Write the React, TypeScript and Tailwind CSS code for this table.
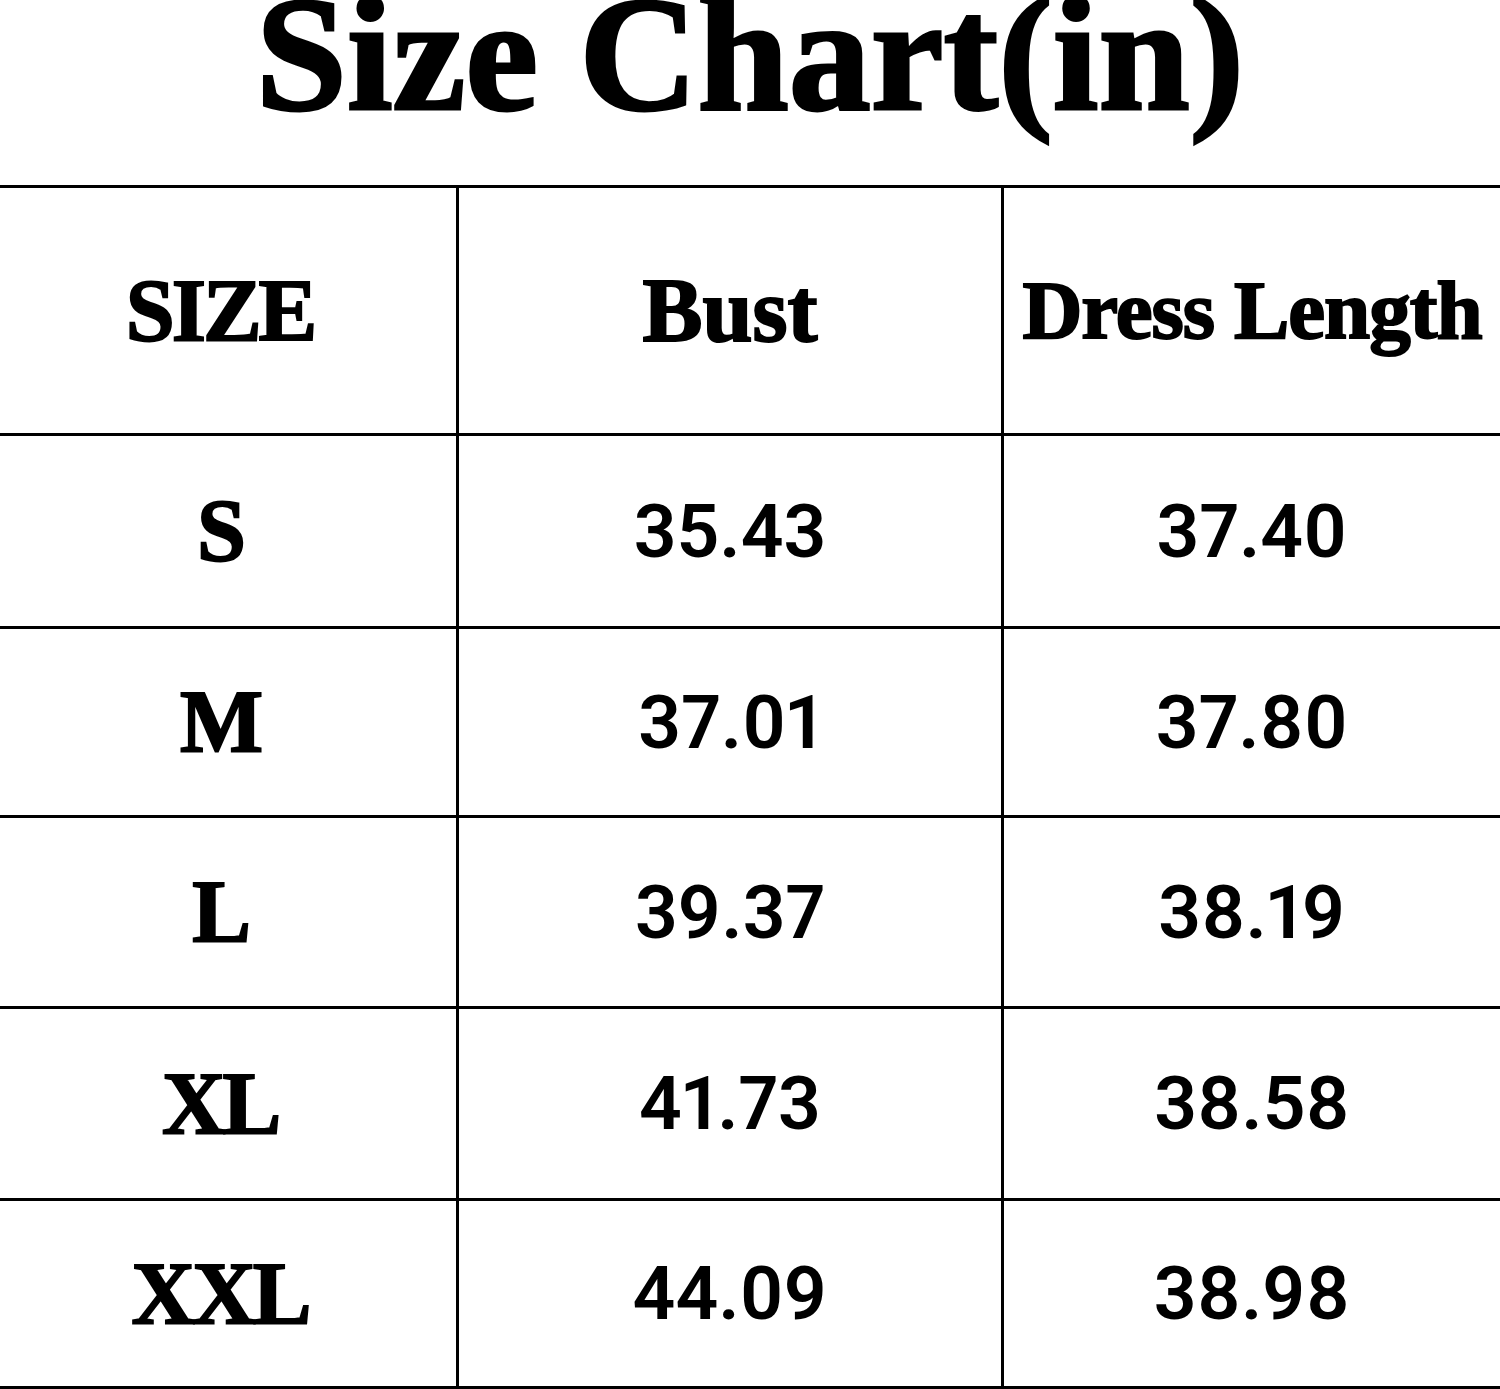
const rows = [
  { size: "S", bust: "35.43", length: "37.40", h: "h-[193px]" },
  { size: "M", bust: "37.01", length: "37.80", h: "h-[189px]" },
  { size: "L", bust: "39.37", length: "38.19", h: "h-[191px]" },
  { size: "XL", bust: "41.73", length: "38.58", h: "h-[192px]" },
  { size: "XXL", bust: "44.09", length: "38.98", h: "h-[188px]" },
];

const serif = "font-['Liberation_Serif',serif] font-bold [-webkit-text-stroke:2px_black]";
const sans = "font-['Roboto',sans-serif] font-semibold proportional-nums";

export default function App() {
  return (
    <div className="w-[1500px] h-[1389px] bg-white text-black overflow-hidden">
      <div className="h-[185px] flex justify-center">
        <h1 className="font-['Liberation_Serif',serif] font-bold [-webkit-text-stroke:3px_black] text-[164px] leading-[108px] whitespace-nowrap">
          Size Chart(in)
        </h1>
      </div>

      <div className="border-t-[3px] border-black">
        <div className="flex h-[248px] border-b-[3px] border-black">
          <div className="w-[459px] border-r-[3px] border-black flex items-center justify-center pr-4">
            <span className={`${serif} text-[88px] tracking-[-3px]`}>SIZE</span>
          </div>
          <div className="w-[545px] border-r-[3px] border-black flex items-center justify-center">
            <span className={`${serif} text-[90px]`}>Bust</span>
          </div>
          <div className="flex-1 flex items-center justify-center">
            <span className={`${serif} text-[83px] tracking-[-1px] whitespace-nowrap`}>Dress Length</span>
          </div>
        </div>

        {rows.map((r) => (
          <div key={r.size} className={`flex ${r.h} border-b-[3px] border-black`}>
            <div className="w-[459px] border-r-[3px] border-black flex items-center justify-center pr-4">
              <span className={`${serif} text-[88px] tracking-[-3px] leading-none`}>{r.size}</span>
            </div>
            <div className="w-[545px] border-r-[3px] border-black flex items-center justify-center">
              <span className={`${sans} text-[75px] leading-none`}>{r.bust}</span>
            </div>
            <div className="flex-1 flex items-center justify-center">
              <span className={`${sans} text-[75px] leading-none`}>{r.length}</span>
            </div>
          </div>
        ))}
      </div>
    </div>
  );
}
